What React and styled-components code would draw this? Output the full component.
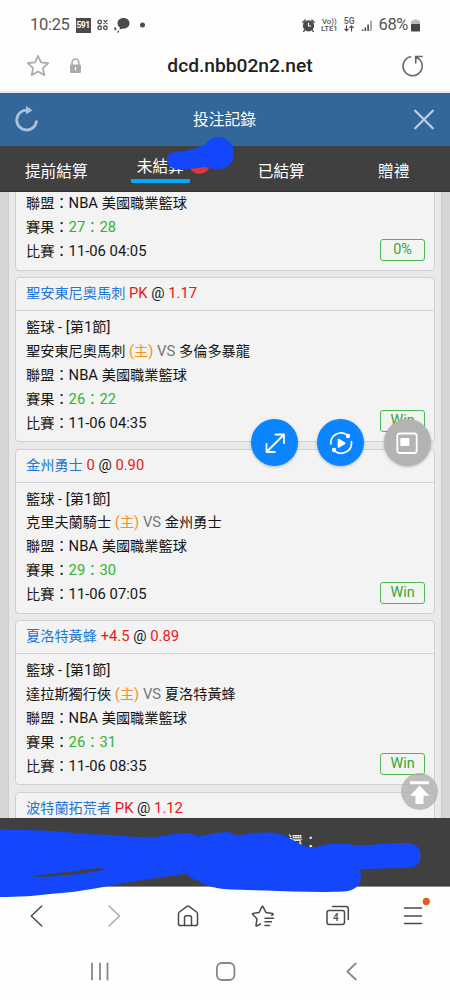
import React from "react";
import styled, { createGlobalStyle } from "styled-components";

const Global = createGlobalStyle`
  * { box-sizing: border-box; }
  body { margin: 0; background: #fefefe; font-family: Roboto, "Noto Sans CJK TC", sans-serif; }
`;

const Screen = styled.div`
  position: relative;
  width: 450px;
  height: 1000px;
  overflow: hidden;
  display: flex;
  flex-direction: column;
  background: #fefefe;
`;

const StatusBar = styled.div`
  height: 50px;
  padding: 0 30px;
  display: flex;
  align-items: center;
  justify-content: space-between;
  color: #555;
`;
const StatusGroup = styled.div`
  display: flex;
  align-items: center;
  gap: ${(p) => p.$gap}px;
`;
const StatusText = styled.span`
  font-size: 16.5px;
  line-height: 20px;
  letter-spacing: ${(p) => p.$track || 0}px;
  white-space: nowrap;
`;
const AppTag = styled.span`
  width: 15px;
  height: 15px;
  background: #4a4a4a;
  color: #fff;
  font-size: 8.5px;
  font-weight: 700;
  line-height: 15px;
  text-align: center;
  letter-spacing: -0.4px;
`;
const NetText = styled.span`
  display: flex;
  flex-direction: column;
  align-items: center;
  font-size: ${(p) => p.$size || 7.8}px;
  line-height: 7px;
  font-weight: 500;
  white-space: nowrap;
`;

const AddressBar = styled.div`
  height: 43px;
  padding: 0 25px 10px 26px;
  display: flex;
  align-items: center;
  justify-content: space-between;
  border-bottom: 2px solid #e8ebf1;
`;
const AddressIcons = styled.div`
  width: 85px;
  display: flex;
  align-items: center;
  gap: 19px;
`;
const Url = styled.div`
  font-size: 19.2px;
  line-height: 24px;
  font-weight: 500;
  color: #222;
`;
const AddressEnd = styled.div`
  width: 56px;
  display: flex;
  justify-content: flex-end;
`;

const TitleBar = styled.header`
  height: 53px;
  padding: 0 15px 0 14px;
  display: flex;
  align-items: center;
  justify-content: space-between;
  background: #336699;
  color: #fff;
`;
const Title = styled.h1`
  margin: 0 3px 0 0;
  font-size: 15.8px;
  line-height: 24px;
  font-weight: 400;
`;

const Tabs = styled.nav`
  height: 46px;
  display: grid;
  grid-template-columns: repeat(4, 1fr);
  background: #404040;
  color: #fff;
  border-bottom: 1px solid #333;
`;
const Tab = styled.div`
  display: flex;
  align-items: ${(p) => (p.$active ? "flex-start" : "center")};
  justify-content: center;
  padding-top: ${(p) => (p.$active ? 9 : 6)}px;
  padding-left: ${(p) => (p.$active ? 4 : 0)}px;
  font-size: 15.7px;
  line-height: 24px;
`;
const ActiveLabel = styled.span`
  padding: 0 6px;
  border-bottom: 4px solid #00aaff;
  border-radius: 1px;
`;
const CountDot = styled.span`
  width: 21px;
  height: 20px;
  margin: -1px 1px 0 -1px;
  border-radius: 50%;
  background: #d83a3a;
`;

const Content = styled.main`
  height: 626px;
  overflow: hidden;
  padding: 0 9px;
  background: #d6d6d6;
`;
const List = styled.div`
  height: 100%;
  padding: 0 6px;
  display: flex;
  flex-direction: column;
  gap: 6.5px;
  background: #e9e9e9;
  box-shadow: 0 0 2px #bbb;
`;
const Card = styled.article`
  flex: none;
  height: ${(p) => (p.$clipped ? 82.5 : 165)}px;
  margin-top: ${(p) => (p.$clipped ? -4 : 0)}px;
  border: 1px solid #d0d0d0;
  border-radius: 4px;
  background: #f3f3f3;
  font-size: 14.2px;
  color: #161616;
`;
const CardHead = styled.div`
  height: 33px;
  padding: 0 10px;
  border-bottom: 1px solid #d2d2d2;
  line-height: 30px;
  white-space: pre;
`;
const CardBody = styled.div`
  height: ${(p) => (p.$clipped ? 80.5 : 130)}px;
  padding: ${(p) => (p.$clipped ? 3 : 5)}px 9px ${(p) => (p.$clipped ? 8.5 : 9)}px 10px;
  display: flex;
  justify-content: space-between;
  align-items: flex-end;
`;
const Lines = styled.div`
  align-self: flex-start;
  line-height: 23.9px;
  white-space: pre;
`;
const Tone = styled.span`
  color: ${(p) => p.$c};
`;
const Latin = styled.span`
  font-size: 14.8px;
  color: ${(p) => p.$c || "inherit"};
`;
const Result = styled.span`
  width: 45px;
  height: 22px;
  border: 1px solid #4db84d;
  border-radius: 3px;
  text-align: center;
  line-height: 19px;
  font-size: 14.4px;
  color: #33a833;
`;

const Summary = styled.footer`
  height: 69px;
  padding: 14px 0 0 287.5px;
  background: #404040;
  border-bottom: 1px solid #8a8a8a;
  color: #fff;
  font-size: 15.4px;
  line-height: 22px;
`;

const BrowserBar = styled.div`
  height: 57px;
  display: grid;
  grid-template-columns: repeat(6, 75px);
  align-items: center;
  justify-items: center;
`;
const SystemBar = styled.div`
  height: 56px;
  padding: 0 88px 0 88px;
  display: flex;
  align-items: center;
  justify-content: space-between;
`;

const Floating = styled.div`
  position: absolute;
  left: 251px;
  top: 419px;
  display: flex;
  gap: 19.4px;
`;
const RoundButton = styled.div`
  width: 47px;
  height: 47px;
  border-radius: 50%;
  display: flex;
  align-items: center;
  justify-content: center;
  background: ${(p) => p.$c};
  box-shadow: 0 1px 3px rgba(0, 0, 0, 0.25);
`;
const TopButton = styled.div`
  position: absolute;
  left: 401px;
  top: 773px;
  width: 37px;
  height: 37px;
  border-radius: 50%;
  background: rgba(176, 176, 176, 0.8);
`;
const Scribble = styled.svg`
  position: absolute;
  left: 0;
  top: 0;
  pointer-events: none;
`;

const GREEN = "#2fb52f";
const RED = "#e81818";
const BLUE = "#2277d8";

const bets = [
  { score: "27：28", time: "11-06 04:05", result: "0%", clipped: true },
  { pick: "聖安東尼奧馬刺", line: "PK", odds: "1.17", home: "聖安東尼奧馬刺", away: "多倫多暴龍", score: "26：22", time: "11-06 04:35", result: "Win" },
  { pick: "金州勇士", line: "0", odds: "0.90", home: "克里夫蘭騎士", away: "金州勇士", score: "29：30", time: "11-06 07:05", result: "Win" },
  { pick: "夏洛特黃蜂", line: "+4.5", odds: "0.89", home: "達拉斯獨行俠", away: "夏洛特黃蜂", score: "26：31", time: "11-06 08:35", result: "Win" },
  { pick: "波特蘭拓荒者", line: "PK", odds: "1.12" },
];

function Score({ value }) {
  const [a, b] = value.split("：");
  return (
    <Tone $c={GREEN}>
      <Latin>{a}</Latin>：<Latin>{b}</Latin>
    </Tone>
  );
}

function BetCard({ bet }) {
  return (
    <Card $clipped={bet.clipped}>
      {bet.pick && (
        <CardHead>
          <Tone $c={BLUE}>{bet.pick}</Tone>
          <Latin $c={RED}> {bet.line}</Latin>
          <Latin> @ </Latin>
          <Latin $c={RED}>{bet.odds}</Latin>
        </CardHead>
      )}
      {bet.score && (
        <CardBody $clipped={bet.clipped}>
          <Lines>
            {bet.home && (
              <>
                <div>籃球<Latin> - [</Latin>第<Latin>1</Latin>節<Latin>]</Latin></div>
                <div>
                  {bet.home}
                  <Tone $c="#f5921e"><Latin> (</Latin>主<Latin>)</Latin></Tone>
                  <Latin $c="#777"> VS </Latin>
                  {bet.away}
                </div>
              </>
            )}
            <div>聯盟：<Latin>NBA </Latin>美國職業籃球</div>
            <div>賽果：<Score value={bet.score} /></div>
            <div>比賽：<Latin>{bet.time}</Latin></div>
          </Lines>
          <Result>{bet.result}</Result>
        </CardBody>
      )}
    </Card>
  );
}

const Icon = styled.svg.attrs({ fill: "none", strokeLinecap: "round", strokeLinejoin: "round" })`
  flex: none;
`;

const Line = ({ w, h, c = "#4a4a4a", s = 1.5, children }) => (
  <Icon width={w} height={h} viewBox={`0 0 ${w} ${h}`} stroke={c} strokeWidth={s}>
    {children}
  </Icon>
);

export default function App() {
  return (
    <Screen>
      <Global />
      <StatusBar>
        <StatusGroup $gap={6}>
          <StatusText $track={-0.3}>10:25</StatusText>
          <AppTag>591</AppTag>
          <Line w={11} h={12} s={1.3}>
            <circle cx="2.7" cy="3" r="1.8" />
            <path d="M6.9 1.4l3 3.2M9.9 1.4l-3 3.2" />
            <circle cx="2.7" cy="8.8" r="1.8" />
            <circle cx="8.4" cy="8.8" r="1.8" />
          </Line>
          <Line w={16} h={16} s={1.5}>
            <path d="M9.5 1C13 1 15.500 3.200 15.500 6.300s-2.500 5.300-6 5.300l-4 .9.400-2C4.400 9.600 3.500 8.200 3.500 6.300 3.500 3.200 6 1 9.500 1z" fill="#4a4a4a" stroke="none" />
            <path d="M1 10.500c.2 2.200 1.700 3.900 4 4.300" strokeWidth="2" strokeDasharray="2.600 2.200" strokeLinecap="butt" />
          </Line>
          <Line w={13} h={8}><circle cx="6.500" cy="4" r="2.500" fill="#4a4a4a" stroke="none" /></Line>
        </StatusGroup>
        <StatusGroup $gap={6}>
          <Line w={13} h={13} s={1.4}>
            <circle cx="6.500" cy="6.800" r="4.900" fill="#4a4a4a" />
            <path d="M.9 3.200L3.200 1M12.100 3.200L9.800 1M2.500 11.500l-.8.900M10.500 11.500l.8.900" />
            <path d="M6.500 4.200v2.800h2.200" stroke="#fff" strokeWidth="1.200" />
          </Line>
          <NetText><span>Vo))</span><span>LTE1</span></NetText>
          <NetText $size={8.6}>
            <span>5G</span>
            <Line w={10} h={7} s={1.200}><path d="M2.500 .8v5M.8 4.200l1.700 1.700 1.700-1.700M7.500 6V1M5.800 2.600L7.500.9l1.700 1.700" /></Line>
          </NetText>
          <Line w={12} h={13} s={1.600}>
            <path d="M1.500 12v-1.500M4.300 12V8.500M7.100 12V5.500" strokeLinecap="butt" />
            <path d="M10 12V1.500" stroke="#999" strokeLinecap="butt" />
          </Line>
          <StatusGroup $gap={3}>
            <StatusText $track={-0.4}>68%</StatusText>
            <Line w={9} h={13}>
              <path d="M2.500 1.500V.5h4v1H8q1 0 1 1V5H0V2.500q0-1 1-1z" fill="#bbb" stroke="none" />
              <path d="M0 5h9v6.500q0 1-1 1H1q-1 0-1-1z" fill="#444" stroke="none" />
            </Line>
          </StatusGroup>
        </StatusGroup>
      </StatusBar>

      <AddressBar>
        <AddressIcons>
          <Line w={24} h={24} c="#aaa" s={1.700}>
            <path d="M12 1.800l3 6.600 7.200.8-5.300 4.900 1.500 7.100L12 17.600l-6.400 3.600 1.500-7.100L1.800 9.200 9 8.400z" />
          </Line>
          <Line w={13} h={16} c="#aaa" s={1.500}>
            <path d="M3 7V4.500a3.400 3.400 0 0 1 6.800 0V7" />
            <rect x="1" y="6.500" width="11" height="8.500" rx="1.200" fill="#aaa" stroke="none" />
            <path d="M6.500 9.300v2.600" stroke="#fff" strokeWidth="1.300" />
          </Line>
        </AddressIcons>
        <Url>dcd.nbb02n2.net</Url>
        <AddressEnd>
          <Line w={24} h={24} c="#666" s={1.600}>
            <path d="M9.500 2.700A9.600 9.600 0 1 0 18.800 5.700L15 2.600M21 2.500H14.700V9" strokeLinejoin="miter" />
          </Line>
        </AddressEnd>
      </AddressBar>

      <TitleBar>
        <Line w={25} h={28} c="#a9c2dc" s={2.800}>
          <path d="M13 4.200A9.900 9.900 0 1 0 22.500 14.500" strokeLinecap="butt" />
          <path d="M12 0l6.500 4.300L12 8.500z" fill="#a9c2dc" stroke="none" />
        </Line>
        <Title>投注記錄</Title>
        <Line w={22} h={22} c="#b9cde2" s={2.300}><path d="M2.200 1.700l17.600 17.600M19.800 1.700L2.200 19.300" /></Line>
      </TitleBar>

      <Tabs>
        <Tab>提前結算</Tab>
        <Tab $active><ActiveLabel>未結算</ActiveLabel><CountDot /></Tab>
        <Tab>已結算</Tab>
        <Tab>贈禮</Tab>
      </Tabs>

      <Content>
        <List>
          {bets.map((bet, i) => <BetCard key={i} bet={bet} />)}
        </List>
      </Content>

      <Summary>還：</Summary>

      <BrowserBar>
        <Line w={20} h={24}><path d="M13.800 2L3.300 12l10.500 10" /></Line>
        <Line w={20} h={24} c="#aaa"><path d="M6 2l10.500 10L6 22" /></Line>
        <Line w={22} h={24}>
          <path d="M1.500 9.800Q1.500 8.700 2.400 8L10 2.300q1-.7 2 0L19.600 8q.9.700.9 1.800v9.900q0 1.800-1.800 1.800H3.300q-1.800 0-1.800-1.800z" />
          <path d="M7.500 21.500v-8q0-1.800 1.800-1.800h3.400q1.800 0 1.800 1.800v8" />
        </Line>
        <Line w={24} h={24}>
          <path d="M9.500 20l-3.800 2q-.8.300-.7-.7l1-6.500-4.300-4.300q-.6-.8.400-1L8 8.600l3-6q.5-.8 1 0l3 6 6.500.9q.9.200.4.900l-1 1" />
          <path d="M14 14.300h8.500M14 17.800h6.500M14 21.500h4.500" />
        </Line>
        <Line w={24} h={24}>
          <rect x="1" y="6.500" width="17.500" height="14" rx="2.200" />
          <path d="M6.500 2.500H20q2.300 0 2.300 2.300v10.700" />
          <text x="9.800" y="17.300" textAnchor="middle" fontSize="10" fontWeight="500" fill="#4a4a4a" stroke="none">4</text>
        </Line>
        <Line w={22} h={36}>
          <path d="M2.500 10h17M2.500 18h17M2.500 25.500h17" />
        </Line>
      </BrowserBar>

      <SystemBar>
        <Line w={24} h={22} c="#888" s={1.800}><path d="M4 2.500v16M12 2.500v16M19.500 2.500v16" /></Line>
        <Line w={22} h={22} c="#888" s={1.800}><rect x="0.900" y="2" width="17.500" height="17" rx="5" /></Line>
        <Line w={20} h={22} c="#888" s={1.800}><path d="M13.800 2.500L5.300 10.500l8.500 8" /></Line>
      </SystemBar>

      <Floating>
        <RoundButton $c="#0a84ff">
          <Line w={24} h={24} c="#fff" s={1.800}><path d="M4 20.500L20.500 4M12.500 3.500H21V12M3.500 13V21H12" /></Line>
        </RoundButton>
        <RoundButton $c="#0a84ff">
          <Line w={24} h={24} c="#fff" s={1.700}>
            <path d="M1.800 13A10.300 10.300 0 0 1 18 3.800M22.400 10.500A10.300 10.300 0 0 1 6 20.200" />
            <circle cx="19" cy="5" r="2.200" fill="#fff" stroke="none" />
            <circle cx="5" cy="19" r="2.200" fill="#fff" stroke="none" />
            <path d="M9.500 8.500v7.500l6.200-3.800z" fill="#fff" />
          </Line>
        </RoundButton>
        <RoundButton $c="#b3b3b3">
          <Line w={24} h={24} c="#fff" s={1.800}>
            <rect x="2.300" y="2.500" width="19.400" height="19.500" rx="2.500" />
            <rect x="5.300" y="7" width="9" height="8" rx="1" fill="#fff" stroke="none" />
          </Line>
        </RoundButton>
      </Floating>

      <TopButton>
        <svg width="37" height="37" viewBox="0 0 37 37" fill="#fff">
          <path d="M9 8.300h19v3H9zM18.500 12.500L28.500 22.800H22.500V31h-8V22.800H9z" />
        </svg>
      </TopButton>

      <Scribble width="450" height="1000" viewBox="0 0 450 1000" fill="#1447fb">
        <circle cx="426.300" cy="901.400" r="3.600" fill="#ee5a1c" />
        <path d="M176 152C188 151 198 148 206 144C209 139 213 137 218 137C227 137 234 144 234 153C234 163 227 169 218 169C213 169 209 168 205 167C195 169 185 169 176 169C171 168 167 165 167 160C167 155 171 152 176 152Z" />
        <path fillRule="evenodd" d="M0 829.500C30 830 50 830.500 65 832C80 834 95 834.500 110 835C125 836 140 837.500 154 837.500C168 835 178 833 188 833Q193 833 198 836.500C208 835 217 832 228 832Q233 834 237 835.500C248 833 260 832.500 272 832.500C287 834 292 841 305 846C318 850 321 843.500 337 843.500C350 843.500 355 846 368 845C380 844 390 843 405 843Q420.500 843 420.500 856Q420.500 868 406 868C390 868 376 869 359 869Q361 872 361 876Q361 890 344 891.500C320 892.500 290 891.500 265 890.500L232 889.500C218 889 205 886 199 881Q191 879.500 187 873.500C172 875.500 150 879 130 882C108 886 80 892 55 893.500C35 896 18 897 0 897ZM32 877C50 877 90 874 106 869Q96 867 76 871C58 873 44 874 32 877Z" />
      </Scribble>
    </Screen>
  );
}
